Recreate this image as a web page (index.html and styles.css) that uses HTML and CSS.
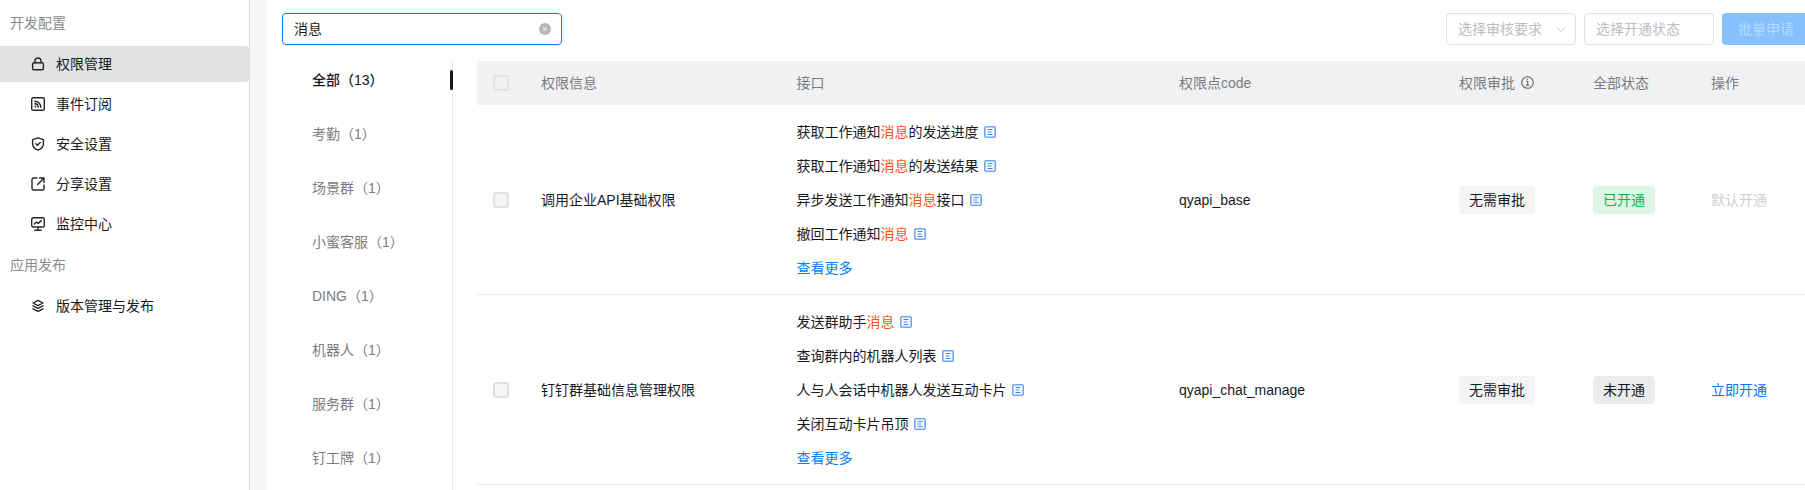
FILE: index.html
```html
<!DOCTYPE html>
<html lang="zh-CN">
<head>
<meta charset="utf-8">
<title>权限管理</title>
<link rel="stylesheet" href="styles.css">
</head>
<body>
<div class="app">
  <aside class="sidebar">
    <div class="nav-title">开发配置</div>
    <a class="nav-item active">
      <svg class="nav-icon" viewBox="0 0 14 14"><rect x="1.600" y="5.800" width="10.800" height="7" rx="1.400"/><path d="M4 5.800V4a3 3 0 0 1 6 0v1.800"/></svg>
      权限管理</a>
    <a class="nav-item">
      <svg class="nav-icon" viewBox="0 0 14 14"><rect x="0.700" y="0.700" width="12.600" height="12.600" rx="1.600"/><path d="M3.800 4.200a6 6 0 0 1 6 6M3.800 6.800a3.400 3.400 0 0 1 3.400 3.400"/><circle class="solid" cx="4.400" cy="9.600" r="1"/></svg>
      事件订阅</a>
    <a class="nav-item">
      <svg class="nav-icon" viewBox="0 0 14 14"><path d="M7 .8l5.400 1.900v4.100c0 3-2.300 5.200-5.400 6.400-3.100-1.200-5.400-3.400-5.400-6.400V2.700z"/><path d="M4.800 6.800l1.600 1.500 2.800-2.700"/></svg>
      安全设置</a>
    <a class="nav-item">
      <svg class="nav-icon" viewBox="0 0 14 14"><path d="M6 1H2.600A1.600 1.600 0 0 0 1 2.600v8.800A1.600 1.600 0 0 0 2.600 13h8.800a1.600 1.600 0 0 0 1.600-1.600V8"/><path d="M6.600 7.400L12.800 1.200M8.600 1h4.400v4.400"/></svg>
      分享设置</a>
    <a class="nav-item">
      <svg class="nav-icon" viewBox="0 0 14 14"><rect x="0.700" y="0.700" width="12.600" height="9.300" rx="1.600"/><path d="M3.400 7l2-2 1.800 1.400 3.200-2.800M7 10v2.800M3.800 13.200h6.400"/></svg>
      监控中心</a>
    <div class="nav-title">应用发布</div>
    <a class="nav-item">
      <svg class="nav-icon" viewBox="0 0 14 14"><path d="M7 1.400l5 2.600-5 2.600L2 4z"/><path d="M2 6.800l5 2.600 5-2.600M2 9.800l5 2.600 5-2.600"/></svg>
      版本管理与发布</a>
  </aside>
  <div class="gutter"></div>
  <main class="main">
    <div class="toolbar">
      <div class="search">
        <span class="search-value">消息</span>
        <span class="clear"><svg viewBox="0 0 12 12"><path d="M4.200 4.200l3.600 3.600M7.800 4.200l-3.600 3.600"/></svg></span>
      </div>
      <div class="filters">
        <div class="select">选择审核要求<svg class="caret" viewBox="0 0 12 12"><path d="M1.500 4l4.500 4.500L10.500 4"/></svg></div>
        <div class="select">选择开通状态</div>
        <button class="batch" type="button">批量申请</button>
      </div>
    </div>
    <div class="content">
      <ul class="tabs">
        <li class="tab active">全部（13）</li>
        <li class="tab">考勤（1）</li>
        <li class="tab">场景群（1）</li>
        <li class="tab">小蜜客服（1）</li>
        <li class="tab">DING（1）</li>
        <li class="tab">机器人（1）</li>
        <li class="tab">服务群（1）</li>
        <li class="tab">钉工牌（1）</li>
      </ul>
      <table class="grid">
        <colgroup>
          <col class="c-check"><col class="c-info"><col class="c-api"><col class="c-code"><col class="c-approve"><col class="c-status"><col class="c-op">
        </colgroup>
        <thead>
          <tr>
            <th class="cell-check"><span class="checkbox head"></span></th>
            <th>权限信息</th>
            <th class="cell-api">接口</th>
            <th>权限点code</th>
            <th>权限审批<svg class="info" viewBox="0 0 12 12"><circle cx="6" cy="6" r="5.300"/><path d="M5 4.800h1.200v3.600M4.400 8.600h3.200M6 2.600v1"/></svg></th>
            <th>全部状态</th>
            <th>操作</th>
          </tr>
        </thead>
        <tbody>
          <tr>
            <td class="cell-check"><span class="checkbox"></span></td>
            <td>调用企业API基础权限</td>
            <td class="cell-api">
              <div class="api">获取工作通知<em>消息</em>的发送进度<svg class="doc" viewBox="0 0 12 12"><rect x="0.800" y="0.800" width="10.400" height="10.400" rx="1.500"/><path d="M3.500 3.500h5M3.500 6h4M3.500 8.500h5"/></svg></div>
              <div class="api">获取工作通知<em>消息</em>的发送结果<svg class="doc" viewBox="0 0 12 12"><rect x="0.800" y="0.800" width="10.400" height="10.400" rx="1.500"/><path d="M3.500 3.500h5M3.500 6h4M3.500 8.500h5"/></svg></div>
              <div class="api">异步发送工作通知<em>消息</em>接口<svg class="doc" viewBox="0 0 12 12"><rect x="0.800" y="0.800" width="10.400" height="10.400" rx="1.500"/><path d="M3.500 3.500h5M3.500 6h4M3.500 8.500h5"/></svg></div>
              <div class="api">撤回工作通知<em>消息</em><svg class="doc" viewBox="0 0 12 12"><rect x="0.800" y="0.800" width="10.400" height="10.400" rx="1.500"/><path d="M3.500 3.500h5M3.500 6h4M3.500 8.500h5"/></svg></div>
              <a class="api link">查看更多</a>
            </td>
            <td>qyapi_base</td>
            <td><span class="tag">无需审批</span></td>
            <td><span class="tag on">已开通</span></td>
            <td><span class="muted">默认开通</span></td>
          </tr>
          <tr>
            <td class="cell-check"><span class="checkbox"></span></td>
            <td>钉钉群基础信息管理权限</td>
            <td class="cell-api">
              <div class="api">发送群助手<em>消息</em><svg class="doc" viewBox="0 0 12 12"><rect x="0.800" y="0.800" width="10.400" height="10.400" rx="1.500"/><path d="M3.500 3.500h5M3.500 6h4M3.500 8.500h5"/></svg></div>
              <div class="api">查询群内的机器人列表<svg class="doc" viewBox="0 0 12 12"><rect x="0.800" y="0.800" width="10.400" height="10.400" rx="1.500"/><path d="M3.500 3.500h5M3.500 6h4M3.500 8.500h5"/></svg></div>
              <div class="api">人与人会话中机器人发送互动卡片<svg class="doc" viewBox="0 0 12 12"><rect x="0.800" y="0.800" width="10.400" height="10.400" rx="1.500"/><path d="M3.500 3.500h5M3.500 6h4M3.500 8.500h5"/></svg></div>
              <div class="api">关闭互动卡片吊顶<svg class="doc" viewBox="0 0 12 12"><rect x="0.800" y="0.800" width="10.400" height="10.400" rx="1.500"/><path d="M3.500 3.500h5M3.500 6h4M3.500 8.500h5"/></svg></div>
              <a class="api link">查看更多</a>
            </td>
            <td>qyapi_chat_manage</td>
            <td><span class="tag">无需审批</span></td>
            <td><span class="tag off">未开通</span></td>
            <td><a class="action">立即开通</a></td>
          </tr>
        </tbody>
      </table>
    </div>
  </main>
</div>
</body>
</html>
```

FILE: styles.css
```css
* { box-sizing: border-box; }
html, body { margin: 0; height: 490px; overflow: hidden; background: #fff; }
body {
  font-family: "Liberation Sans", "Noto Sans CJK SC", sans-serif;
  font-size: 14px;
  line-height: 22px;
  color: #171a1d;
}
.app { display: flex; height: 490px; width: 1805px; overflow: hidden; }

/* sidebar */
.sidebar {
  flex: none;
  width: 250px;
  padding-top: 4px;
  border-right: 1px solid #dfe0e1;
}
.nav-title {
  height: 38px;
  margin-bottom: 4px;
  padding-left: 10px;
  line-height: 38px;
  color: #8a8c8e;
}
.nav-item {
  display: flex;
  align-items: center;
  gap: 11px;
  height: 36px;
  margin-bottom: 4px;
  padding-left: 31px;
  border-radius: 0 4px 4px 0;
}
.nav-item.active { background: #e1e2e3; }
.nav-icon {
  width: 14px;
  height: 14px;
  flex: none;
  overflow: visible;
  fill: none;
  stroke: #25282b;
  stroke-width: 1.400;
  stroke-linejoin: round;
  stroke-linecap: round;
}
.nav-icon .solid { fill: #25282b; stroke: none; }

.gutter { flex: none; width: 16px; background: #f5f6f8; }

/* main */
.main { flex: none; width: 1544px; padding: 13px 0 0 16px; }
.toolbar { display: flex; justify-content: space-between; height: 32px; margin-bottom: 16px; }
.search {
  display: flex;
  align-items: center;
  justify-content: space-between;
  width: 280px;
  padding: 0 10px 0 11px;
  border: 1px solid #1a7ffb;
  border-radius: 4px;
  box-shadow: 0 0 0 1px #e3f0ff;
}
.clear {
  display: flex;
  width: 12px;
  height: 12px;
  border-radius: 50%;
  background: #b4b6b8;
}
.clear svg { width: 12px; height: 12px; fill: none; stroke: #e8e9ea; stroke-width: 1.200; }
.filters { display: flex; gap: 8px; }
.select {
  position: relative;
  width: 130px;
  padding-left: 11px;
  border: 1px solid #e1e2e3;
  border-radius: 4px;
  line-height: 30px;
  color: #bcbdbf;
}
.caret {
  position: absolute;
  right: 8px;
  top: 9px;
  width: 12px;
  height: 12px;
  fill: none;
  stroke: #c4c5c7;
  stroke-width: 1;
}
.batch {
  width: 88px;
  padding: 0;
  border: 0;
  border-radius: 4px;
  background: #85c1ff;
  color: #b5d9ff;
  font: inherit;
  text-align: center;
}

.content { display: flex; align-items: flex-start; height: 440px; }

/* category tabs */
.tabs {
  flex: none;
  width: 171px;
  height: 440px;
  margin: 0 24px 0 0;
  padding: 0;
  list-style: none;
  border-right: 1px solid #e8e9ea;
}
.tab {
  position: relative;
  height: 38px;
  margin-bottom: 16px;
  padding-left: 30px;
  line-height: 38px;
  color: #7b7d80;
}
.tab.active { color: #171a1d; font-weight: 500; }
.tab.active::after {
  content: "";
  position: absolute;
  right: -1px;
  top: 9px;
  width: 3px;
  height: 20px;
  border-radius: 2px;
  background: #171a1d;
}

/* table */
.grid { table-layout: fixed; width: 1333px; border-collapse: separate; border-spacing: 0; }
.c-check { width: 64px; }
.c-info { width: 255px; }
.c-api { width: 383px; }
.c-code { width: 280px; }
.c-approve { width: 134px; }
.c-status { width: 118px; }
.c-op { width: 99px; }
th {
  height: 44px;
  padding: 0;
  background: #f0f1f3;
  color: #7a7c7f;
  font-weight: 400;
  text-align: left;
}
td { padding: 16px 0 15px; border-bottom: 1px solid #e9eaeb; }
th.cell-api, td.cell-api { padding-left: 0.5px; }
.cell-check { padding-left: 16px; font-size: 0; line-height: 0; }
.checkbox {
  display: inline-block;
  width: 16px;
  height: 16px;
  border: 2px solid #e0e1e2;
  border-radius: 3px;
  background: #f5f5f5;
}
.checkbox.head { background: #f0f1f3; }
.info {
  width: 13px;
  height: 13px;
  margin-left: 6px;
  vertical-align: -1px;
  fill: none;
  stroke: #5e6063;
  stroke-width: 1;
}
.api { display: block; height: 22px; margin-bottom: 12px; }
.api:last-child { margin-bottom: 0; }
.api em { font-style: normal; color: #ff5219; }
.doc {
  width: 12px;
  height: 12px;
  margin-left: 5px;
  vertical-align: -1px;
  fill: #fff;
  stroke: #6aa6fb;
  stroke-width: 1.600;
}
.doc path { stroke-width: 1.100; stroke: #3f87ee; }
.link { color: #007fff; }
.action { color: #0a74ff; }
.tag {
  display: inline-block;
  height: 28px;
  padding: 0 10px;
  border-radius: 4px;
  background: #f3f5f5;
  line-height: 28px;
}
.tag.on { background: #e0f4e6; color: #00b853; }
.tag.off { background: #e9ebed; }
.muted { color: #cfd0d1; }
```
